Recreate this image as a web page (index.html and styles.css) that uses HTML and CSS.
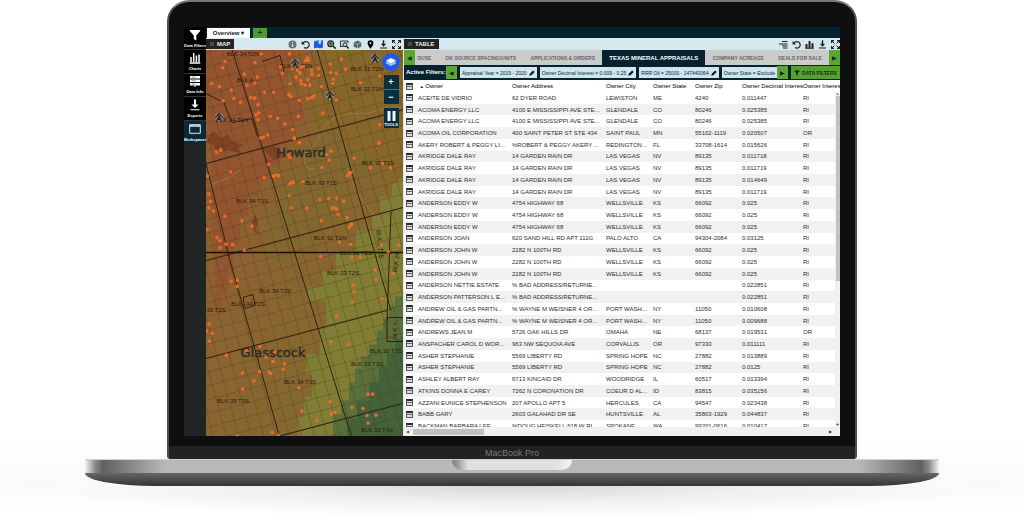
FILE: index.html
```html
<!DOCTYPE html>
<html lang="en">
<head>
<meta charset="utf-8">
<meta name="viewport" content="width=device-width, initial-scale=1">
<title>Mineral Appraisals Workspace</title>
<link rel="stylesheet" href="styles.css">
</head>
<body>
<svg class="defs" aria-hidden="true">
  <symbol id="i-info" viewBox="0 0 9 9"><circle cx="4.5" cy="4.5" r="4" fill="#6d7276"/><path d="M4.5 2v1M4.5 4v3" stroke="#d6e6ec" stroke-width="1.2"/></symbol>
  <symbol id="i-undo" viewBox="0 0 9 9"><path d="M2 3.2A3.3 3.3 0 1 1 3 7.6" fill="none" stroke="#222" stroke-width="1.2"/><path d="M.6 1v3.4H4z" fill="#222"/></symbol>
  <symbol id="i-map" viewBox="0 0 9 9"><path d="M0 1.5 3 .6v7L0 8.6zM2.800.6h3v7.600l-3-.6zM5.600.9 9 .3v7.300L5.600 8.500z" fill="#1f5ae0"/><path d="M5.800.4a1.500 1.500 0 0 1 1.500 1.500c0 1-1.500 2.600-1.500 2.600S4.300 2.900 4.300 1.900A1.500 1.500 0 0 1 5.800.4z" fill="#bcd7ff"/></symbol>
  <symbol id="i-zoom" viewBox="0 0 9 9"><circle cx="3.700" cy="3.700" r="2.900" fill="#8fa0a6" stroke="#222" stroke-width="1.200"/><path d="M6 6l2.600 2.600" stroke="#222" stroke-width="1.600"/><path d="M2.300 3.700h2.800M3.700 2.300v2.800" stroke="#222" stroke-width=".9"/></symbol>
  <symbol id="i-find" viewBox="0 0 9 9"><path d="M.5 1h7.500M.5 1v5.500h3M8 1v2" fill="none" stroke="#333" stroke-width="1.100"/><circle cx="5" cy="4.700" r="2" fill="#b9c9cf" stroke="#222"/><path d="M6.500 6.200 8.700 8.500" stroke="#222" stroke-width="1.300"/></symbol>
  <symbol id="i-cube" viewBox="0 0 9 9"><path d="M4.500.6 8.300 2.400v4L4.500 8.400.7 6.400v-4z" fill="#53656b"/><path d="M1 2.600l3.500 1.700L8 2.600M4.500 4.300v4" fill="none" stroke="#c5d6dc" stroke-width=".6"/></symbol>
  <symbol id="i-pin" viewBox="0 0 9 9"><path d="M4.500.2a2.900 2.900 0 0 1 2.900 3C7.400 5.200 4.500 8.800 4.500 8.800S1.600 5.200 1.600 3.200a2.900 2.900 0 0 1 2.900-3z" fill="#000"/><circle cx="4.500" cy="3.100" r="1" fill="#d6e6ec"/></symbol>
  <symbol id="i-down" viewBox="0 0 9 9"><path d="M3.800.3h1.400v3.500h1.900L4.500 6.800 1.900 3.800h1.900zM1 7.500h7v1H1z" fill="#1c1c1c"/></symbol>
  <symbol id="i-full" viewBox="0 0 9 9"><path d="M.6 3V.6H3M6 .6h2.400V3M8.400 6v2.400H6M3 8.400H.6V6" fill="none" stroke="#222" stroke-width="1.200"/><path d="M1 1l2.500 2.500M8 1 5.500 3.500M8 8 5.500 5.500M1 8l2.500-2.500" stroke="#222" stroke-width="1"/></symbol>
  <symbol id="i-indent" viewBox="0 0 9 9"><path d="M3 1.500h5.500M0 4h8.500M3 6h5.500M4 8h4.500" stroke="#222" stroke-width="1"/></symbol>
  <symbol id="i-bars" viewBox="0 0 9 9"><path d="M1.500 4v4M4.500 1v7M7.500 3.200V8" stroke="#222" stroke-width="2"/><path d="M.2 8.300h8.600" stroke="#222" stroke-width="1"/></symbol>
  <symbol id="i-pen" viewBox="0 0 9 9"><path d="M.5 8.600l.7-3L6.200.6 8.500 2.900 3.500 7.900z" fill="#111"/></symbol>
  <symbol id="i-funnel" viewBox="0 0 12 12"><path d="M.8 1h10.400v1L7.300 6.500v5L4.800 10V6.500L.8 2z" fill="currentColor"/></symbol>
  <symbol id="i-tower" viewBox="0 0 26 26"><circle cx="13" cy="13" r="12" fill="#a99e90" opacity=".55"/><path d="M3 14 13 3l10 11M7 24l6-15 6 15M9 19l7-4M17 19l-7-4" fill="none" stroke="#1e2430" stroke-width="3"/></symbol>
</svg>

<main class="laptop">
  <div class="lid">
    <div class="screen">
      <nav class="side" aria-label="Workspace">
        <button class="side-btn"><svg viewBox="0 0 12 12"><use href="#i-funnel"/></svg><span>Data Filters</span></button>
        <button class="side-btn"><svg viewBox="0 0 12 12"><path d="M2 5v5M4.700 1v9M7.400 3.500V10M10 2.500V10M.7 11h10.600" fill="none" stroke="#fff" stroke-width="1.500"/></svg><span>Charts</span></button>
        <button class="side-btn"><svg viewBox="0 0 12 12"><path d="M1 1h10v2.500H1zM1 4.500h10V7H1zM1 8h10v2.500H1zM5.500 10.500h1V12h-1z" fill="#fff"/><path d="M2.500 2.200h4M2.500 5.700h4M2.500 9.200h4" stroke="#555" stroke-width=".6"/></svg><span>Data Info</span></button>
        <button class="side-btn"><svg viewBox="0 0 12 12"><path d="M5 .5h2v5h2.500L6 9 2.500 5.500H5zM1.500 10.300h9v1h-9z" fill="#fff"/></svg><span>Exports</span></button>
        <button class="side-btn side-on"><svg viewBox="0 0 12 12"><path d="M.7 1.700h10.600v8.600H.7z" fill="none" stroke="#dcecf2" stroke-width="1"/><path d="M1 3h10" stroke="#dcecf2" stroke-width="1.500"/></svg><span>Workspaces</span></button>
      </nav>

      <div class="work">
        <div class="tabs">
          <button class="tab">Overview ▾</button>
          <button class="tab-add" aria-label="Add workspace">+</button>
        </div>
        <div class="panels">
          <section class="panel map-panel">
            <header class="bar">
              <h2 class="title">MAP</h2>
              <div class="tools">
                <svg><use href="#i-info"/></svg><svg><use href="#i-undo"/></svg><svg><use href="#i-map"/></svg><svg><use href="#i-zoom"/></svg><svg><use href="#i-find"/></svg><svg><use href="#i-cube"/></svg><svg><use href="#i-pin"/></svg><svg><use href="#i-down"/></svg><svg><use href="#i-full"/></svg>
              </div>
            </header>
            <div class="map">
              <svg class="map-art" viewBox="206 49 197 387" preserveAspectRatio="xMidYMid slice" role="img" aria-label="County map">
                <defs>
                  <linearGradient id="land" x1="0" y1="0" x2="1" y2="1">
                    <stop offset="0" stop-color="#925a30"/><stop offset=".45" stop-color="#8a6430"/><stop offset="1" stop-color="#7d6e2f"/>
                  </linearGradient>
                  <pattern id="sections" width="12.200" height="13.400" patternUnits="userSpaceOnUse" patternTransform="translate(273 145) rotate(-15.200)">
                    <path d="M0 0H12.200M0 0V13.400" fill="none" stroke="#4a2e14" stroke-opacity=".62" stroke-width=".9"/>
                  </pattern>
                </defs>
                <rect x="206" y="49" width="197" height="387" fill="url(#land)"/>
                <path d="M206 49h90v20h-8v28h14v25h-8v20h-14v24h-12v14h-10v16h-10v20h-8v26h-6v26h-6v24h-6v20h-6z" fill="#93532f" opacity=".75"/>
                <path d="M323 49H403V190H380V178H356V150H326V130H312V90H323z" fill="#86662a"/>
                <path d="M316 130h30v20h24v34h-20v24h-12v16h-20v20h-30v18h-20v-50h10v-24h12v-22h14v-18h12z" fill="#82682f"/>
                <path d="M403 176v260h-105v-20h6v-20h8v-22h-6v-20h14v-26h6v-28h-18v-14h14v-16h14v-20h20v-20h16v-16h8v-18h12v-12z" fill="#807d34"/>
                <path d="M403 296h-8v10h-6v12h-6v12h-6v14h-8v12h-8v12h-6v14h-6v18h-8v14h-8v22h72z" fill="#59703a"/>
                <path d="M403 338h-8v14h-8v14h-8v16h-10v18h-12v18h-10v18h56z" fill="#446239"/>
                <path d="M213 130l8 8 7-5 4 8 12 3-6 4 4 5-14-3-10 2-5-8-7-2zM262 148l14-2 10 8-12 6zM255 213l3 8-2 8 4 6-6-4-2-10z" fill="#71371c" opacity=".6"/>
                <path d="M206 186l24-9 12-10M325 130c-8 8-9 16-20 24-3 10 2 16 10 14M347 166c6 24 20 40 38 62M403 107c-20-4-26 8-48 6-20 0-30 10-36 20" fill="none" stroke="#b08a4c" stroke-opacity=".5"/>
                <rect x="206" y="49" width="197" height="387" fill="url(#sections)"/>
                <g fill="none" stroke="#33200e">
                  <path d="M232 49 352 438M317 49 391 310M206 163l24 97 50 178M206 163 403 109M206 260 403 207M206 358 387 310M278 436 403 403M391 211 387 320" stroke-width="1"/>
                  <path d="M206 93l18 9 8 20 20-4 5 17M262 61l18-6 4 16M243 297l10-3 2 11-10 3zM387 317h16M387 317v24h16" stroke-width="1"/>
                  <path d="M206 252H403" stroke="#17110a" stroke-width="1.400"/>
                </g>
                <g class="blk">
                  <text x="243" y="55">BLK 34 T2N</text><text x="245" y="81">BLK A</text><text x="296" y="67">BLK 33 T2N</text><text x="367" y="70">BLK 31 T2N</text><text x="367" y="90">BLK 32 T1N</text><text x="232" y="121">BLK 34 T1N</text>
                  <text x="252" y="202">BLK 34 T1S</text><text x="321" y="184">BLK 33 T1S</text><text x="378" y="164">BLK 31 T1S</text><text x="330" y="239">BLK 32 T2N</text><text x="356" y="254">BLK 32 T2S</text><text x="343" y="274">BLK 33 T2S</text>
                  <text x="275" y="292">BLK 34 T2S</text><text x="248" y="305">BLK -34 T2S</text><text x="216" y="311">35 T2S</text><text x="300" y="383">BLK 34 T3S</text><text x="233" y="402">BLK 35 T3S</text><text x="367" y="365">BLK 33 T3S</text><text x="386" y="352">BLK 32 T3S</text><text x="377" y="431">BLK 33 T4S</text>
                  <text transform="translate(378 244) rotate(83)">BLK 2 T2S</text><text transform="translate(398 262) rotate(-83)">BLK 29</text><text transform="translate(397 330) rotate(-90)">BLK X</text>
                </g>
                <g class="county"><text x="301" y="156">Howard</text><text x="273" y="356">Glasscock</text></g>
                <g class="wells">
                  <path transform="translate(160 0) scale(.3333)" d="M195 183h0M188 202h0M253 221h0M303 160h0M285 186h0M292 230h0M285 248h0M261 254h0M155 249h0M178 258h0M214 269h0M222 294h0M242 305h0M189 301h0M272 291h0M284 293h0M294 313h0M313 276h0M341 276h0M362 199h0M367 219h0M388 160h0M390 250h0M393 288h0M387 282h0M397 205h0M408 230h0M413 210h0M423 200h0M430 198h0M422 240h0M424 249h0M420 218h0M437 180h0M443 172h0M445 180h0M455 209h0M456 221h0M443 238h0M435 254h0M449 254h0M475 204h0M475 225h0M485 258h0M511 191h0M512 217h0M529 219h0M519 236h0M518 249h0M544 176h0M557 206h0M462 286h0M455 292h0M444 295h0M418 300h0M529 299h0M488 338h0M415 348h0M331 348h0M353 353h0M375 371h0M398 387h0M403 413h0M419 427h0M294 358h0M288 343h0M296 337h0M302 412h0M310 410h0M323 403h0M659 372h0M657 428h0M660 226h0M602 246h0M182 448h0"/>
                  <path transform="translate(180 130) scale(.3333)" d="M110 65h0M122 60h0M152 124h0M266 102h0M252 141h0M280 137h0M289 133h0M296 135h0M343 24h0M358 37h0M330 80h0M325 73h0M453 62h0M441 72h0M447 89h0M426 111h0M335 157h0M340 155h0M330 160h0M369 153h0M328 196h0M334 232h0M380 233h0M420 208h0M446 205h0M470 202h0M491 212h0M456 233h0M462 231h0M470 236h0M474 252h0M424 271h0M501 262h0M515 280h0M507 291h0M512 285h0M522 83h0M513 126h0M502 136h0M507 130h0M597 38h0M571 112h0M607 99h0M632 112h0M86 190h0M92 213h0M86 232h0M101 242h0M82 297h0M82 137h0M135 257h0M186 271h0M216 287h0M111 321h0M120 331h0M138 341h0M120 352h0M158 342h0M193 359h0M154 452h0M172 449h0M171 468h0M478 335h0M512 342h0M604 343h0M656 345h0M625 364h0M422 379h0M516 380h0M541 380h0M586 419h0M588 447h0M639 429h0M520 464h0"/>
                  <path transform="translate(180 280) scale(.3333)" d="M522 33h0M517 64h0M606 54h0M470 107h0M452 183h0M506 192h0M87 131h0M80 152h0M97 159h0M88 182h0M139 224h0M285 215h0M200 210h0M240 198h0M258 230h0M279 243h0M313 251h0M310 266h0M239 274h0M268 275h0M273 279h0M187 278h0M222 301h0M188 326h0M357 322h0M450 364h0M366 392h0M454 400h0M465 396h0M410 420h0M516 381h0M549 384h0M564 341h0M578 341h0M561 405h0M588 404h0M564 428h0M172 466h0M277 456h0M295 465h0"/>
                </g>
                <use href="#i-tower" x="290" y="58" width="10" height="10"/><use href="#i-tower" x="325" y="90" width="10" height="10"/><use href="#i-tower" x="370" y="53" width="10" height="10"/><use href="#i-tower" x="214" y="112" width="10" height="10"/>
              </svg>
              <div class="map-controls">
                <button class="layers" aria-label="Layers"><svg viewBox="0 0 12 12"><path d="M1 7.500 6 10l5-2.500V5.500H1z" fill="#9fc0f5"/><path d="M1 4.500 6 2l5 2.500L6 7z" fill="#fff"/></svg></button>
                <div class="zoomer"><button aria-label="Zoom in">+</button><button aria-label="Zoom out">−</button></div>
                <button class="toolbox"><svg viewBox="0 0 9 10"><path d="M.5 0h3v10h-3zM5.500 0h3v10h-3z" fill="#f2f6f7"/></svg><span>TOOLS</span></button>
              </div>
            </div>
          </section>

          <section class="panel table-panel">
            <header class="bar">
              <h2 class="title">TABLE</h2>
              <div class="tools"><svg><use href="#i-indent"/></svg><svg><use href="#i-undo"/></svg><svg><use href="#i-bars"/></svg><svg><use href="#i-down"/></svg><svg><use href="#i-full"/></svg></div>
            </header>
            <div class="sheets">
              <button class="arrow" aria-label="Previous tabs">◀</button>
              <div class="sheet-list">
                <button class="sheet first">OUSE</button><button class="sheet">OK SOURCE SPACING/UNITS</button><button class="sheet">APPLICATIONS &amp; ORDERS</button><button class="sheet sheet-on">TEXAS MINERAL APPRAISALS</button><button class="sheet">COMPANY ACREAGE</button><button class="sheet">DEALS FOR SALE</button>
              </div>
              <button class="arrow" aria-label="Next tabs">▶</button>
            </div>
            <div class="filters">
              <strong class="filters-name">Active Filters:</strong>
              <button class="arrow" aria-label="Previous filters">◀</button>
              <div class="chips">
                <button class="chip">Appraisal Year = 2019 - 2020<svg><use href="#i-pen"/></svg></button>
                <button class="chip">Owner Decimal Interest = 0.009 - 0.25<svg><use href="#i-pen"/></svg></button>
                <button class="chip">RRR Oil = 25000 - 147440064<svg><use href="#i-pen"/></svg></button>
                <button class="chip">Owner State = Exclude</button>
              </div>
              <button class="arrow" aria-label="Next filters">▶</button>
              <button class="data-filters"><svg><use href="#i-funnel"/></svg>DATA FILTERS</button>
            </div>
            <div class="grid">
              <div class="rows">
                <table>
                  <colgroup><col class="c-icon"><col class="c-long"><col class="c-long"><col class="c-mid"><col class="c-state"><col class="c-mid"><col class="c-dec"><col></colgroup>
                  <thead><tr><th></th><th>&nbsp;<small>▲</small> Owner</th><th>Owner Address</th><th>Owner City</th><th>Owner State</th><th>Owner Zip</th><th class="cut">Owner Decimal Interest</th><th class="cut">Owner Interest</th></tr></thead>
                  <tbody>
                    <tr><td></td><td>ACEITE DE VIDRIO</td><td>62 DYER ROAD</td><td>LEWISTON</td><td>ME</td><td>4240</td><td>0.011447</td><td>RI</td></tr>
                    <tr><td></td><td>ACOMA ENERGY LLC</td><td>4100 E MISSISSIPPI AVE STE...</td><td>GLENDALE</td><td>CO</td><td>80246</td><td>0.025385</td><td>RI</td></tr>
                    <tr><td></td><td>ACOMA ENERGY LLC</td><td>4100 E MISSISSIPPI AVE STE...</td><td>GLENDALE</td><td>CO</td><td>80246</td><td>0.025385</td><td>RI</td></tr>
                    <tr><td></td><td>ACOMA OIL CORPORATION</td><td>400 SAINT PETER ST STE 434</td><td>SAINT PAUL</td><td>MN</td><td>55102-1119</td><td>0.020507</td><td>OR</td></tr>
                    <tr><td></td><td>AKERY ROBERT &amp; PEGGY LI...</td><td>%ROBERT &amp; PEGGY AKERY ...</td><td>REDINGTON...</td><td>FL</td><td>33708-1614</td><td>0.015626</td><td>RI</td></tr>
                    <tr><td></td><td>AKRIDGE DALE RAY</td><td>14 GARDEN RAIN DR</td><td>LAS VEGAS</td><td>NV</td><td>89135</td><td>0.011718</td><td>RI</td></tr>
                    <tr><td></td><td>AKRIDGE DALE RAY</td><td>14 GARDEN RAIN DR</td><td>LAS VEGAS</td><td>NV</td><td>89135</td><td>0.011719</td><td>RI</td></tr>
                    <tr><td></td><td>AKRIDGE DALE RAY</td><td>14 GARDEN RAIN DR</td><td>LAS VEGAS</td><td>NV</td><td>89135</td><td>0.014649</td><td>RI</td></tr>
                    <tr><td></td><td>AKRIDGE DALE RAY</td><td>14 GARDEN RAIN DR</td><td>LAS VEGAS</td><td>NV</td><td>89135</td><td>0.011719</td><td>RI</td></tr>
                    <tr><td></td><td>ANDERSON EDDY W</td><td>4754 HIGHWAY 68</td><td>WELLSVILLE</td><td>KS</td><td>66092</td><td>0.025</td><td>RI</td></tr>
                    <tr><td></td><td>ANDERSON EDDY W</td><td>4754 HIGHWAY 68</td><td>WELLSVILLE</td><td>KS</td><td>66092</td><td>0.025</td><td>RI</td></tr>
                    <tr><td></td><td>ANDERSON EDDY W</td><td>4754 HIGHWAY 68</td><td>WELLSVILLE</td><td>KS</td><td>66092</td><td>0.025</td><td>RI</td></tr>
                    <tr><td></td><td>ANDERSON JOAN</td><td>620 SAND HILL RD APT 111G</td><td>PALO ALTO</td><td>CA</td><td>94304-2084</td><td>0.03125</td><td>RI</td></tr>
                    <tr><td></td><td>ANDERSON JOHN W</td><td>2282 N 100TH RD</td><td>WELLSVILLE</td><td>KS</td><td>66092</td><td>0.025</td><td>RI</td></tr>
                    <tr><td></td><td>ANDERSON JOHN W</td><td>2282 N 100TH RD</td><td>WELLSVILLE</td><td>KS</td><td>66092</td><td>0.025</td><td>RI</td></tr>
                    <tr><td></td><td>ANDERSON JOHN W</td><td>2282 N 100TH RD</td><td>WELLSVILLE</td><td>KS</td><td>66092</td><td>0.025</td><td>RI</td></tr>
                    <tr><td></td><td>ANDERSON NETTIE ESTATE</td><td>% BAD ADDRESS/RETURNE...</td><td></td><td></td><td></td><td>0.022851</td><td>RI</td></tr>
                    <tr><td></td><td>ANDERSON PATTERSON L E...</td><td>% BAD ADDRESS/RETURNE...</td><td></td><td></td><td></td><td>0.022851</td><td>RI</td></tr>
                    <tr><td></td><td>ANDREW OIL &amp; GAS PARTN...</td><td>% WAYNE M WEISNER 4 OR...</td><td>PORT WASH...</td><td>NY</td><td>11050</td><td>0.010608</td><td>RI</td></tr>
                    <tr><td></td><td>ANDREW OIL &amp; GAS PARTN...</td><td>% WAYNE M WEISNER 4 OR...</td><td>PORT WASH...</td><td>NY</td><td>11050</td><td>0.009688</td><td>RI</td></tr>
                    <tr><td></td><td>ANDREWS JEAN M</td><td>5726 OAK HILLS DR</td><td>OMAHA</td><td>NE</td><td>68137</td><td>0.019531</td><td>OR</td></tr>
                    <tr><td></td><td>ANSPACHER CAROL D WOR...</td><td>963 NW SEQUOIA AVE</td><td>CORVALLIS</td><td>OR</td><td>97330</td><td>0.011111</td><td>RI</td></tr>
                    <tr><td></td><td>ASHER STEPHANIE</td><td>5569 LIBERTY RD</td><td>SPRING HOPE</td><td>NC</td><td>27882</td><td>0.013889</td><td>RI</td></tr>
                    <tr><td></td><td>ASHER STEPHANIE</td><td>5569 LIBERTY RD</td><td>SPRING HOPE</td><td>NC</td><td>27882</td><td>0.0125</td><td>RI</td></tr>
                    <tr><td></td><td>ASHLEY ALBERT RAY</td><td>6713 KINCAID DR</td><td>WOODRIDGE</td><td>IL</td><td>60517</td><td>0.013394</td><td>RI</td></tr>
                    <tr><td></td><td>ATKINS DONNA E CAREY</td><td>7262 N CORONATION DR</td><td>COEUR D AL...</td><td>ID</td><td>83815</td><td>0.035156</td><td>RI</td></tr>
                    <tr><td></td><td>AZZANI EUNICE STEPHENSON</td><td>207 APOLLO APT 5</td><td>HERCULES</td><td>CA</td><td>94547</td><td>0.023438</td><td>RI</td></tr>
                    <tr><td></td><td>BABB GARY</td><td>2603 GALAHAD DR SE</td><td>HUNTSVILLE</td><td>AL</td><td>35803-1929</td><td>0.044837</td><td>RI</td></tr>
                    <tr><td></td><td>BACKMAN BARBARA LEE</td><td>%DOUG HEISKELL 618 W RI</td><td>SPOKANE</td><td>WA</td><td>99201-0616</td><td>0.010417</td><td>RI</td></tr>
                  </tbody>
                </table>
                <div class="vbar"><span>▲</span><i></i><span class="vend">▼</span></div>
              </div>
              <div class="hbar"><span>◀</span><i></i><span class="hend">▶</span></div>
            </div>
          </section>
        </div>
      </div>
    </div>
    <p class="brand">MacBook Pro</p>
  </div>
  <div class="deck"><div class="notch"></div></div>
  <div class="underside"></div>
  <div class="shade"></div>
</main>
</body>
</html>
```
FILE: styles.css
```css
*, *::before { box-sizing: border-box; }
body { margin: 0; min-height: 100vh; overflow: hidden; background: linear-gradient(#fff 440px, #fafafa 480px, #fff 515px); font-family: "Liberation Sans", Arial, sans-serif; font-size: 6px; line-height: 8px; color: #2b2d33; }
button { margin: 0; padding: 0; border: 0; background: none; font: inherit; color: inherit; white-space: nowrap; }
.defs { position: absolute; width: 0; height: 0; }

/* Laptop shell */
.laptop { padding: 0 85px; }
.lid { margin: 0 82px; padding: 25px 15px 0; border: 2px solid #555; border-bottom: 0; border-color: #777 #4e4e4e; border-radius: 22px 22px 3px 3px; background: linear-gradient(to top, #222 13px, #0f0f0f 13px); }
.brand { margin: 10px 0 0; height: 13px; text-align: center; font-size: 9px; line-height: 14px; color: #7a7a7a; }
.deck { height: 14px; border-top: 1px solid #d2d2d2; background: linear-gradient(to right, #f4f4f4, #8b8b8b 10px, #606060 18px, #b8b8b8 80px, #b8b8b8 calc(100% - 80px), #606060 calc(100% - 18px), #8b8b8b calc(100% - 10px), #f4f4f4); }
.notch { width: 120px; height: 10px; margin: 0 auto; border-radius: 0 0 10px 10px; background: linear-gradient(to right, #777, #aaa 8px, #e0e0e0 16px, #e0e0e0 104px, #f4f4f4); }
.underside { height: 13px; border-radius: 0 0 70px 70px / 0 0 13px 13px; background: linear-gradient(#666, #343434); }
.shade { height: 32px; margin: 0 -60px; background: radial-gradient(ellipse 50% 100% at 50% 0, #d6d6d6, #f0f0f0 50%, #fff0 100%); }

/* Application */
.screen { display: flex; height: 409px; overflow: hidden; background: #222525; }
.side { flex: 0 0 22px; height: 117px; display: grid; grid-auto-rows: 1fr; }
.side-btn { display: flex; flex-direction: column; align-items: center; justify-content: center; gap: 2px; overflow: hidden; border-bottom: 1px solid #333; background: #000; color: #fff; font-size: 4px; line-height: 5px; font-weight: 700; }
.side-btn svg { width: 12px; height: 12px; flex: none; }
.side-on { background: #0a2a38; border: 0; }
.work { flex: 1; min-width: 0; display: flex; flex-direction: column; background: #06222f; }
.tabs { display: flex; gap: 3px; padding: 1px 1px 0; height: 11px; }
.tab { width: 43px; background: #fff; color: #222; font-size: 6px; font-weight: 700; }
.tab-add { width: 14px; background: #4b9b32; color: #10310b; font-size: 8px; font-weight: 700; }
.panels { flex: 1; min-height: 0; display: flex; gap: 1px; background: #dfe6e8; }
.panel { min-width: 0; display: flex; flex-direction: column; }
.map-panel { flex: 197; }
.table-panel { flex: 436; background: #fff; }
.bar { display: flex; justify-content: space-between; align-items: center; flex: none; height: 12px; padding-right: 2px; background: #d5e8ef; }
.title { display: flex; align-items: center; gap: 3px; align-self: stretch; margin: 1px 0; padding: 0 4px; background: #222; color: #eee; font-size: 6px; line-height: 8px; }
.title::before { content: ""; width: 4px; height: 4px; background: #4a4a4a; }
.tools { display: flex; gap: 4px; }
.table-panel .bar { padding-right: 0; }
.tools svg { width: 9px; height: 9px; }

/* Map */
.map { position: relative; flex: 1; min-height: 0; overflow: hidden; }
.map-art { display: block; width: 100%; height: 100%; }
.blk { font-size: 6px; fill: #2c1a0b; text-anchor: middle; }
.county { font-family: "DejaVu Sans", sans-serif; font-size: 13px; fill: #2b2a2c; stroke: #2b2a2c; stroke-width: .4px; text-anchor: middle; }
.wells { fill: none; stroke: #f8692a; stroke-opacity: .9; stroke-width: 11px; stroke-linecap: round; }
.map-controls { position: absolute; top: 3px; right: 3px; display: flex; flex-direction: column; align-items: center; gap: 4px; }
.layers { width: 18px; height: 18px; display: grid; place-items: center; border-radius: 50%; background: #2459e6; }
.layers svg { width: 12px; height: 12px; }
.zoomer { display: grid; gap: 1px; width: 15px; }
.zoomer button { height: 14px; background: #09303f; color: #fff; font-size: 9px; font-weight: 700; }
.toolbox { display: flex; flex-direction: column; align-items: center; gap: 1px; width: 15px; padding: 3px 0 1px; background: #09303f; color: #fff; font-size: 4px; line-height: 5px; font-weight: 700; }
.toolbox svg { width: 9px; height: 10px; }

/* Sheet tabs and filters */
.sheets, .filters { display: flex; flex: none; height: 15px; }
.sheets { background: #cbcbcb; }
.arrow { flex: 0 0 11px; background: #5aa535; color: #0e2a10; font-size: 6px; }
.sheet-list { flex: 1; min-width: 0; display: flex; overflow: hidden; }
.sheet { flex: auto; padding: 0 5px; color: #66686a; font-size: 5px; font-weight: 700; }
.first { padding-left: 0; }
.sheet-on { background: #06222f; color: #fff; font-size: 6px; }
.filters { background: #06222f; padding: 1px 0; }
.filters-name { flex: none; width: 42px; padding-left: 2px; color: #fff; font-size: 6px; line-height: 13px; white-space: nowrap; }
.chips { flex: 1; min-width: 0; display: flex; gap: 3px; padding: 1px 0 1px 3px; overflow: hidden; }
.chip { flex: none; display: flex; align-items: center; gap: 2px; padding: 0 2px; background: #cfe6ef; color: #0b1d28; font-size: 5px; }
.chip svg { width: 6px; height: 6px; }
.data-filters { flex: none; display: flex; align-items: center; justify-content: center; gap: 2px; width: 49px; margin-left: 3px; background: #55a034; color: #12300f; font-size: 5px; font-weight: 700; }
.data-filters svg { width: 6px; height: 6px; color: #0b1d10; }

/* Records */
.grid { flex: 1; min-height: 0; display: flex; flex-direction: column; }
.rows { position: relative; flex: 1; min-height: 0; overflow: hidden; }
table { width: 100%; height: 352px; table-layout: fixed; border-collapse: collapse; }
thead tr { height: 12px; }
.c-icon { width: 14px; }
.c-long { width: 94px; }
.c-mid { width: 47px; }
.c-state { width: 42px; }
.c-dec { width: 61px; }
th, td { padding: 0 2px 0 0; overflow: hidden; white-space: nowrap; text-overflow: ellipsis; text-align: left; font-weight: 400; }
th { color: #000; }
th small { font-size: 4px; line-height: 4px; }
.cut { padding-right: 1px; text-overflow: clip; }
tbody tr:nth-child(even) { background: #f1f1f1; }
th:first-child::before, td:first-child::before { content: ""; display: block; width: 7px; height: 7px; margin-left: 2px; border: 1px solid #555; border-top: 2px solid #26282c; background: linear-gradient(#ddd 1px, #666 1px, #666 2px, #ddd 2px); }
.vbar { position: absolute; top: 12px; right: 0; bottom: 0; width: 5px; display: flex; flex-direction: column; align-items: center; background: #f0f0f0; color: #777; font-size: 4px; line-height: 4px; }
.vbar i { width: 4px; height: 185px; background: #c1c1c1; }
.vend { margin-top: auto; color: #222; }
.hbar { flex: none; height: 9px; display: flex; align-items: center; gap: 4px; padding: 0 8px 0 2px; background: #f0f0f0; color: #555; font-size: 4px; line-height: 6px; }
.hbar i { width: 71px; height: 6px; background: #c1c1c1; }
.hend { margin-left: auto; color: #222; }
```
